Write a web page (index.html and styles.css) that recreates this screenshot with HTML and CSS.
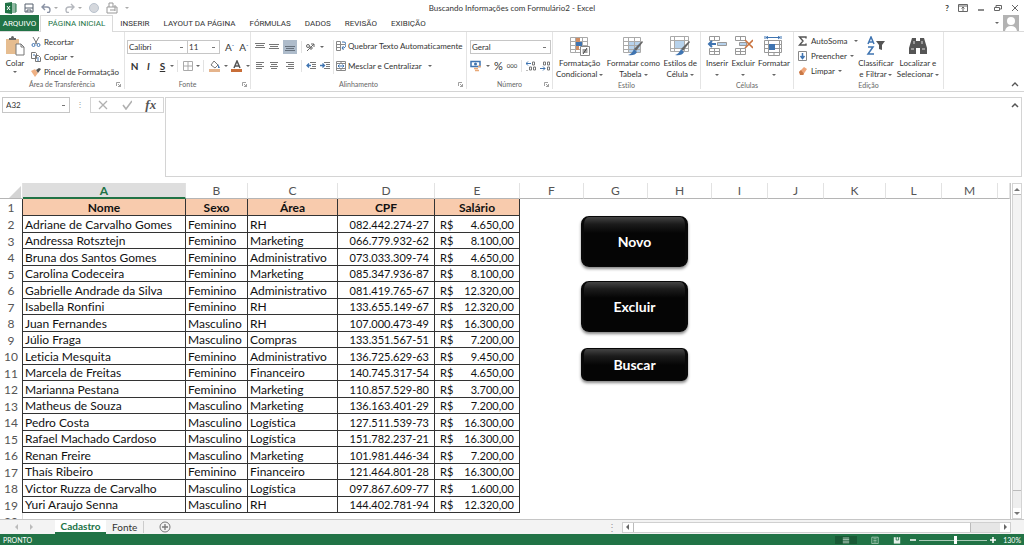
FILE: index.html
```html
<!DOCTYPE html>
<html lang="pt-BR">
<head>
<meta charset="utf-8">
<title>Buscando Informações com Formulário2 - Excel</title>
<link rel="stylesheet" href="styles.css">
</head>
<body>
<header class="titlebar">
  <div class="quick">
    <svg class="i12" viewBox="0 0 12 12"><path d="M6 2h5v8H6z" fill="#fff" stroke="#217346"/><path d="M7 4h4M7 6h4M7 8h4" stroke="#217346"/><path d="M0 1l7-1v12l-7-1z" fill="#217346"/><path d="M2 4l3 4M5 4L2 8" stroke="#fff"/></svg>
    <svg class="i10" viewBox="0 0 10 10" fill="none" stroke="#57606e"><path d="M1 1h8v8H1z"/><path d="M1 5h8M3 9V7h4v2" /></svg>
    <span class="pair"><svg class="i10" viewBox="0 0 10 10" fill="none" stroke="#8b93a5" stroke-width="1.4"><path d="M4 1L1 4l3 3M1 4h5q3 0 3 3t-3 2.500"/></svg><i class="caret dim"></i></span>
    <span class="pair"><svg class="i10" viewBox="0 0 10 10" fill="none" stroke="#b4b7bd" stroke-width="1.4"><path d="M6 1l3 3-3 3M9 4H4Q1 4 1 7t3 2.500"/></svg><i class="caret dim"></i></span>
    <svg class="i10" viewBox="0 0 10 10"><circle cx="5" cy="5" r="4.500" fill="#d5d8dd" stroke="#b9c2cd"/></svg>
    <svg class="i12" viewBox="0 0 12 12" fill="none" stroke="#999"><path d="M1 5h10v6H1zM3 5V1h4v4M4 8h5M9 3v6"/></svg>
    <i class="caret dim"></i>
  </div>
  <h1 class="title">Buscando Informações com Formulário2 - Excel</h1>
  <div class="window">
    <button aria-label="Ajuda">?</button>
    <button aria-label="Opções da faixa"><svg class="i10" viewBox="0 0 10 10" fill="none" stroke="#666"><path d="M.5 1.500h9v7h-9zM.5 3h9M5 8V4M3.500 5.500L5 4l1.500 1.500"/></svg></button>
    <button aria-label="Minimizar"><svg class="i8" viewBox="0 0 8 8"><path d="M1 6h6" stroke="#666" stroke-width="1.5"/></svg></button>
    <button aria-label="Restaurar"><svg class="i8" viewBox="0 0 8 8" fill="none" stroke="#666"><path d="M.5 3.500h5v3h-5zM2 3V1.500h5.500v3.500H6"/></svg></button>
    <button aria-label="Fechar"><svg class="i8" viewBox="0 0 8 8"><path d="M1 1l6 6M7 1L1 7" stroke="#666"/></svg></button>
  </div>
</header>
<nav class="tabs">
  <a href="#arquivo" class="file">ARQUIVO</a>
  <a href="#inicio" class="current">PÁGINA INICIAL</a>
  <a href="#inserir">INSERIR</a>
  <a href="#layout">LAYOUT DA PÁGINA</a>
  <a href="#formulas">FÓRMULAS</a>
  <a href="#dados">DADOS</a>
  <a href="#revisao">REVISÃO</a>
  <a href="#exibicao">EXIBIÇÃO</a>
  <button class="user" aria-label="Conta"><i class="caret"></i><svg class="avatar" viewBox="0 0 16 16"><path d="M0 0h16v16H0z" fill="#b3b3b3"/><circle cx="8" cy="6" r="4" fill="#fff"/><path d="M2 16q1-5 6-5t6 5z" fill="#fff"/></svg></button>
</nav>
<section class="ribbon">
  <div class="group clip">
    <div class="tools">
      <button class="big"><svg class="i20" viewBox="0 0 20 20"><path d="M1 3h13v15H1z" fill="#e6bd90"/><path d="M4 4V2h2q0-2 1.500-2T9 2h2v2z" fill="#666"/><path d="M11 8h5l3 3v8h-8z" fill="#fff" stroke="#777"/><path d="M16 8v3h3" fill="none" stroke="#777"/></svg>Colar<i class="caret"></i></button>
      <div class="stack">
        <button><svg class="i10" viewBox="0 0 10 10" fill="none"><path d="M2 0l4 7M8 0L4 7" stroke="#777"/><circle cx="2.500" cy="8" r="1.500" stroke="#3f74b1"/><circle cx="7.500" cy="8" r="1.500" stroke="#3f74b1"/></svg>Recortar</button>
        <button><svg class="i10" viewBox="0 0 10 10" fill="#fff" stroke="#777"><path d="M.5.5h4l1 1v5h-5zM4.500 3.500h3l2 2v4h-5z"/><path d="M6 6h2M6 8h2M2 3h2" stroke="#3f74b1"/></svg>Copiar <i class="caret"></i></button>
        <button><svg class="i10" viewBox="0 0 10 10"><path d="M0 4l4-2 3 4-3 4z" fill="#efb184"/><path d="M5 3l3-2 2 1-3 4z" fill="#555"/></svg>Pincel de Formatação</button>
      </div>
    </div>
    <div class="label">Área de Transferência<svg class="corner" viewBox="0 0 5 5"><path d="M.5 4V.5H4M2 2l2.500 2.500M4.500 2v2.500H2" fill="none" stroke="#888" stroke-width=".8"/></svg></div>
  </div>
  <div class="group font">
    <div class="tools lines">
      <div class="line tight"><select class="fontname" aria-label="Fonte"><option>Calibri</option></select><select class="fontsize" aria-label="Tamanho"><option>11</option></select>
        <button class="grow" aria-label="Aumentar fonte">A<sup>ˆ</sup></button><button class="grow" aria-label="Diminuir fonte">A<sup>ˇ</sup></button></div>
      <div class="line fmt"><button><b>N</b></button><button><b><em>I</em></b></button><button><b><u>S</u></b></button><i class="caret"></i><i class="sep"></i>
        <svg class="i10" viewBox="0 0 10 10" fill="none" stroke="#aaa"><path d="M.5.500h9v9h-9zM5 .5v9M.5 5h9"/></svg><i class="caret"></i><i class="sep"></i>
        <svg class="i12" viewBox="0 0 12 12"><path d="M2 5l3-4 4 4-3 3z" fill="#fff" stroke="#777"/><path d="M9 4l2 4H9z" fill="#3f74b1"/><path d="M0 9h11v3H0z" fill="#e5b48c"/></svg><i class="caret"></i>
        <svg class="i12" viewBox="0 0 12 12"><path d="M3 8l3-7 3 7M4 6h4" fill="none" stroke="#555" stroke-width="1.500"/><path d="M0 9h11v3H0z" fill="#c86e38"/></svg><i class="caret"></i></div>
    </div>
    <div class="label">Fonte<svg class="corner" viewBox="0 0 5 5"><path d="M.5 4V.5H4M2 2l2.500 2.500M4.500 2v2.500H2" fill="none" stroke="#888" stroke-width=".8"/></svg></div>
  </div>
  <div class="group align">
    <div class="tools">
      <div class="lines left">
        <div class="line al"><svg class="i10" viewBox="0 0 10 10" stroke="#777"><path d="M0 1.500h10M1 3.500h8M0 5.500h10"/></svg><svg class="i10" viewBox="0 0 10 10" stroke="#777"><path d="M0 2.500h10M1 4.500h8M0 6.500h10"/></svg><span class="on"><svg class="i10" viewBox="0 0 10 10" stroke="#66717d"><path d="M0 4.500h10M1 6.500h8M0 8.500h10"/></svg></span><i class="sep"></i><svg class="i10" viewBox="0 0 10 10" fill="none" stroke="#666"><path d="M1 9l7-7M5 2h3v3"/><circle cx="2" cy="4" r="1.500"/><circle cx="5" cy="6" r="1.200"/></svg><i class="caret"></i></div>
        <div class="line al"><svg class="i10" viewBox="0 0 10 10" stroke="#777"><path d="M1 1.500h8M1 3.500h6M1 5.500h8M1 7.500h6"/></svg><svg class="i10" viewBox="0 0 10 10" stroke="#777"><path d="M1 1.500h8M2 3.500h6M1 5.500h8M2 7.500h6"/></svg><svg class="i10 mid" viewBox="0 0 10 10" stroke="#777"><path d="M1 1.500h8M3 3.500h6M1 5.500h8M3 7.500h6"/></svg><i class="sep"></i><svg class="i10" viewBox="0 0 10 10" fill="none" stroke="#777"><path d="M4 1.500h6M6 3.500h4M6 5.500h4M4 7.500h6"/><path d="M5 4.500H1M3 2.500l-2 2 2 2" stroke="#3f74b1" stroke-width="1.300"/></svg><svg class="i10" viewBox="0 0 10 10" fill="none" stroke="#777"><path d="M4 1.500h6M6 3.500h4M6 5.500h4M4 7.500h6"/><path d="M0 4.500h4M2.500 2.500l2 2-2 2" stroke="#3f74b1" stroke-width="1.300"/></svg></div>
      </div>
      <div class="lines right">
        <button><svg class="i10" viewBox="0 0 10 10" fill="none" stroke="#888"><path d="M.5.500h4v9h-4zM.5 3.500h9M.5 6.500h4"/><path d="M6 1h2q2 0 2 2.500T8 7H6M7.500 5L6 7l1.500 2" stroke="#3f74b1"/></svg>Quebrar Texto Automaticamente</button>
        <button><svg class="i10" viewBox="0 0 10 10" fill="none" stroke="#888"><path d="M.5.500h9v9h-9zM.5 2.500h9M.5 7.500h9M5 .5v2M5 7.500v2"/><path d="M2 5h6M3.500 3.500L2 5l1.500 1.500M6.500 3.500L8 5 6.500 6.500" stroke="#3f74b1"/></svg>Mesclar e Centralizar<i class="caret"></i></button>
      </div>
    </div>
    <div class="label">Alinhamento<svg class="corner" viewBox="0 0 5 5"><path d="M.5 4V.5H4M2 2l2.500 2.500M4.500 2v2.500H2" fill="none" stroke="#888" stroke-width=".8"/></svg></div>
  </div>
  <div class="group number">
    <div class="tools lines">
      <div class="line"><select class="format" aria-label="Formato"><option>Geral</option></select></div>
      <div class="line num"><svg class="i12" viewBox="0 0 12 12"><path d="M1 1.500h9v5H1z" fill="#fff" stroke="#3f74b1" stroke-width="1.500"/><circle cx="5.500" cy="4" r="1.500" fill="#3f74b1"/><path d="M4 8.500h4M5 10.500h4M8 6.500h3" stroke="#e8a877" stroke-width="1.500"/></svg><i class="caret"></i><span class="pct">%</span><span class="zeros">000</span><i class="sep"></i>
        <svg class="i10" viewBox="0 0 10 10" fill="none" stroke="#777"><path d="M5 2.500H0M2 .5l-2 2 2 2" stroke="#3f74b1"/><path d="M6.500 1h2v3h-2zM3.500 6h2v3h-2zM7.500 6h2v3h-2zM1 9v1"/></svg>
        <svg class="i10" viewBox="0 0 10 10" fill="none" stroke="#777"><path d="M3.500 1h2v3h-2zM7.500 1h2v3h-2zM7.500 6h2v3h-2z"/><path d="M0 7.500h5M3 5.500l2 2-2 2" stroke="#3f74b1"/></svg></div>
    </div>
    <div class="label">Número<svg class="corner" viewBox="0 0 5 5"><path d="M.5 4V.5H4M2 2l2.500 2.500M4.500 2v2.500H2" fill="none" stroke="#888" stroke-width=".8"/></svg></div>
  </div>
  <div class="group style">
    <div class="tools">
      <button class="big"><svg class="i20" viewBox="0 0 20 20" fill="none" stroke="#aaa"><path d="M.5 1.500h17v15H.5zM.5 5.500h17M.5 9.500h17M.5 13.500h17M5.500 1.500v15M12.500 1.500v15"/><path d="M6 2h4v4H6z" fill="#cf8d63" stroke="none"/><path d="M6 6h6v4H6z" fill="#3f74b1" stroke="none"/><path d="M6 10h3v4H6z" fill="#cf8d63" stroke="none"/><path d="M10.500 10.500h9v9h-9z" fill="#fff" stroke="#888"/><path d="M12.500 14h5M12.500 16h5M17 12l-4 6" stroke="#444"/></svg><span>Formatação<br>Condicional <i class="caret"></i></span></button>
      <button class="big"><svg class="i20" viewBox="0 0 20 20" fill="none" stroke="#aaa"><path d="M5 5h12v11H5z" fill="#b7d2ec" stroke="none"/><path d="M.5 1.500h17v15H.5zM.5 5.500h17M.5 9.500h17M.5 13.500h17M5.500 1.500v15M11.500 1.500v15"/><path d="M19 5l1 1-7 9-2-2z" fill="#666" stroke="none"/><path d="M11 13l3 3q-2 4-9 3 4-1 6-6z" fill="#3f74b1" stroke="none"/></svg><span>Formatar como<br>Tabela <i class="caret"></i></span></button>
      <button class="big"><svg class="i20" viewBox="0 0 20 20" fill="none" stroke="#aaa"><path d="M4 5h10v7H4z" fill="#b7d2ec" stroke="none"/><path d="M.5.500h18v15H.5zM.5 4.500h18M.5 12.500h18M4.500.500v15M14.500.500v15"/><path d="M19 5l1 1-7 9-2-2z" fill="#666" stroke="none"/><path d="M11 13l3 3q-2 4-9 3 4-1 6-6z" fill="#3f74b1" stroke="none"/></svg><span>Estilos de<br>Célula <i class="caret"></i></span></button>
    </div>
    <div class="label">Estilo</div>
  </div>
  <div class="group cells">
    <div class="tools">
      <button class="big"><svg class="i20" viewBox="0 0 20 20" fill="#fff" stroke="#999"><path d="M2.500.500h10v4h-10zM7.500.500v4M2.500 12.500h10v6h-10zM7.500 12.500v6M2.500 15.500h10"/><path d="M10.500 6.500h9v3h-9z" fill="#b7d2ec"/><path d="M9 8H2M5 5L2 8l3 3" fill="none" stroke="#3f74b1" stroke-width="2"/></svg><span>Inserir<br><i class="caret"></i></span></button>
      <button class="big"><svg class="i20" viewBox="0 0 20 20" fill="#fff" stroke="#999"><path d="M2.500.500h10v4h-10zM7.500.500v4M2.500 12.500h10v6h-10zM7.500 12.500v6M2.500 15.500h10"/><path d="M6.500 6.500h7v3h-7z" fill="#b7d2ec"/><path d="M12 4l8 8M20 4l-8 8" stroke="#c9733f" stroke-width="1.600"/></svg><span>Excluir<br><i class="caret"></i></span></button>
      <button class="big"><svg class="i20" viewBox="0 0 20 20" fill="#fff" stroke="#999"><path d="M.5 4.500h17v12H.5zM.5 8.500h17M.5 12.500h17M4.500 4.500v15h11v-15M10 16v4"/><path d="M5 8h6v6H5z" fill="#3f74b1" stroke="none"/><path d="M2 1.500h14M4 0L2 1.500 4 3M14 0l2 1.500L14 3M1 0v3M17 0v3" fill="none" stroke="#3f74b1"/></svg><span>Formatar<br><i class="caret"></i></span></button>
    </div>
    <div class="label">Células</div>
  </div>
  <div class="group edit">
    <div class="tools">
      <div class="stack">
        <button><svg class="i10" viewBox="0 0 10 10" fill="none" stroke="#555" stroke-width="1.400"><path d="M8 2.500V1H1.500L5 5 1.500 9H8V7.500"/></svg>AutoSoma <i class="caret far"></i></button>
        <button><svg class="i10" viewBox="0 0 10 10" fill="none" stroke="#888"><path d="M.5.500h8v9h-8z"/><path d="M4.500 2v5M2.500 5l2 2.500 2-2.500" stroke="#3f74b1" stroke-width="1.500"/></svg>Preencher <i class="caret"></i></button>
        <button><svg class="i10" viewBox="0 0 10 10"><path d="M1 6l5-5 3 2-4 6H3z" fill="#efa67a"/><path d="M1 6l2-2 3 4-1 1H2z" fill="#c97845"/></svg>Limpar <i class="caret"></i></button>
      </div>
      <button class="big"><svg class="i20" viewBox="0 0 20 20" fill="none"><path d="M2 8l3-7 3 7M3 6h4M2 11h5l-5 7h6" stroke="#3f74b1" stroke-width="1.500"/><path d="M10 5h9l-3 4v5l-3-1V9z" fill="#555"/></svg><span>Classificar<br>e Filtrar <i class="caret"></i></span></button>
      <button class="big"><svg class="i20" viewBox="0 0 20 20" fill="#555"><path d="M4 2h4v3h4V2h4l3 10v6h-7v-6H8v6H1v-6z"/><path d="M3 13h3M14 13h3M6 5v3M14 5v3" stroke="#ddd"/></svg><span>Localizar e<br>Selecionar <i class="caret"></i></span></button>
    </div>
    <div class="label">Edição</div>
  </div>
  <button class="collapse" aria-label="Recolher"><svg class="i8" viewBox="0 0 8 8" fill="none" stroke="#555" stroke-width="1.300"><path d="M1 5l3-3 3 3"/></svg></button>
</section>
<section class="formula">
  <select class="name" aria-label="Caixa de nome"><option>A32</option></select>
  <span class="dots">⋮</span>
  <div class="fx"><button aria-label="Cancelar"><svg class="i10" viewBox="0 0 10 10"><path d="M1 1l8 8M9 1L1 9" stroke="#b0b0b0" stroke-width="1.300"/></svg></button><button aria-label="Inserir"><svg class="i10" viewBox="0 0 10 10"><path d="M1 5l3 4 6-8" fill="none" stroke="#b0b0b0" stroke-width="1.600"/></svg></button><button class="fn"><em>fx</em></button></div>
  <div class="entry"><textarea aria-label="Barra de fórmulas"></textarea><svg class="i8" viewBox="0 0 8 8" fill="none" stroke="#555" stroke-width="1.500"><path d="M1 5l3-3 3 3"/></svg></div>
</section>
<main class="sheet">
  <div class="grid">
    <table>
      <colgroup><col class="w-n"><col class="w-a"><col class="w-b"><col class="w-c"><col class="w-d"><col class="w-e"><col class="w-g"><col class="w-g"><col class="w-g"><col class="w-i"><col class="w-i"><col class="w-f"><col class="w-i"><col class="w-i"><col></colgroup>
      <thead><tr><th><svg class="all" viewBox="0 0 12 12"><path d="M12 0v12H0z" fill="#d4d4d4"/></svg></th><th class="sel">A</th><th>B</th><th>C</th><th>D</th><th>E</th><th>F</th><th>G</th><th>H</th><th>I</th><th>J</th><th>K</th><th>L</th><th>M</th><th></th></tr></thead>
      <tbody>
        <tr class="head"><th>1</th><td>Nome</td><td>Sexo</td><td>Área</td><td>CPF</td><td>Salário</td></tr>
        <tr><th>2</th><td>Adriane de Carvalho Gomes</td><td>Feminino</td><td>RH</td><td>082.442.274-27</td><td><span>R$</span>4.650,00</td></tr>
        <tr><th>3</th><td>Andressa Rotsztejn</td><td>Feminino</td><td>Marketing</td><td>066.779.932-62</td><td><span>R$</span>8.100,00</td></tr>
        <tr><th>4</th><td>Bruna dos Santos Gomes</td><td>Feminino</td><td>Administrativo</td><td>073.033.309-74</td><td><span>R$</span>4.650,00</td></tr>
        <tr><th>5</th><td>Carolina Codeceira</td><td>Feminino</td><td>Marketing</td><td>085.347.936-87</td><td><span>R$</span>8.100,00</td></tr>
        <tr><th>6</th><td>Gabrielle Andrade da Silva</td><td>Feminino</td><td>Administrativo</td><td>081.419.765-67</td><td><span>R$</span>12.320,00</td></tr>
        <tr><th>7</th><td>Isabella Ronfini</td><td>Feminino</td><td>RH</td><td>133.655.149-67</td><td><span>R$</span>12.320,00</td></tr>
        <tr><th>8</th><td>Juan Fernandes</td><td>Masculino</td><td>RH</td><td>107.000.473-49</td><td><span>R$</span>16.300,00</td></tr>
        <tr><th>9</th><td>Júlio Fraga</td><td>Masculino</td><td>Compras</td><td>133.351.567-51</td><td><span>R$</span>7.200,00</td></tr>
        <tr><th>10</th><td>Leticia Mesquita</td><td>Feminino</td><td>Administrativo</td><td>136.725.629-63</td><td><span>R$</span>9.450,00</td></tr>
        <tr><th>11</th><td>Marcela de Freitas</td><td>Feminino</td><td>Financeiro</td><td>140.745.317-54</td><td><span>R$</span>4.650,00</td></tr>
        <tr><th>12</th><td>Marianna Pestana</td><td>Feminino</td><td>Marketing</td><td>110.857.529-80</td><td><span>R$</span>3.700,00</td></tr>
        <tr><th>13</th><td>Matheus de Souza</td><td>Masculino</td><td>Marketing</td><td>136.163.401-29</td><td><span>R$</span>7.200,00</td></tr>
        <tr><th>14</th><td>Pedro Costa</td><td>Masculino</td><td>Logística</td><td>127.511.539-73</td><td><span>R$</span>16.300,00</td></tr>
        <tr><th>15</th><td>Rafael Machado Cardoso</td><td>Masculino</td><td>Logística</td><td>151.782.237-21</td><td><span>R$</span>16.300,00</td></tr>
        <tr><th>16</th><td>Renan Freire</td><td>Masculino</td><td>Marketing</td><td>101.981.446-34</td><td><span>R$</span>7.200,00</td></tr>
        <tr><th>17</th><td>Thaís Ribeiro</td><td>Feminino</td><td>Financeiro</td><td>121.464.801-28</td><td><span>R$</span>16.300,00</td></tr>
        <tr><th>18</th><td>Victor Ruzza de Carvalho</td><td>Masculino</td><td>Logística</td><td>097.867.609-77</td><td><span>R$</span>1.600,00</td></tr>
        <tr><th>19</th><td>Yuri Araujo Senna</td><td>Masculino</td><td>RH</td><td>144.402.781-94</td><td><span>R$</span>12.320,00</td></tr>
        <tr><th>20</th></tr>
      </tbody>
    </table>
    <div class="macros"><button>Novo</button><button>Excluir</button><button class="short">Buscar</button></div>
  </div>
  <div class="vscroll"><button aria-label="Acima"><i class="tri up"></i></button><span class="vthumb"></span><button aria-label="Abaixo"><i class="tri down"></i></button></div>
</main>
<footer class="sheets">
  <div class="arrows"><i class="tri left"></i><i class="tri rightw"></i></div>
  <a href="#cadastro" class="active">Cadastro</a><a href="#fonte" class="other">Fonte</a>
  <button class="add" aria-label="Nova planilha"><svg viewBox="0 0 12 12" fill="none" stroke="#777"><circle cx="6" cy="6" r="5"/><path d="M6 3v6M3 6h6" stroke-width="1.300"/></svg></button>
  <span class="dots">⋮</span>
  <div class="hscroll"><button aria-label="Esquerda"><i class="tri left dark"></i></button><span class="hthumb"></span><button aria-label="Direita"><i class="tri rightw dark"></i></button></div>
</footer>
<div class="status">
  <span>PRONTO</span>
  <div class="views">
    <span class="view"><svg class="i8" viewBox="0 0 10 10" stroke="#c8ddd0"><path d="M1 2.500h8M1 4.500h8M1 6.500h8M1 8.500h8"/></svg></span>
    <svg class="i8" viewBox="0 0 10 10" fill="none" stroke="#b3d0bf"><path d="M1 1.500h8v8H1zM3 3.500h4M3 5.500h4M3 7.500h4"/></svg>
    <svg class="i8" viewBox="0 0 10 10"><path d="M1 1.500h8v8H1z" fill="#e4efe8"/><path d="M4 1v4h3V1" fill="none" stroke="#217346"/></svg>
  </div>
  <div class="zoom"><button aria-label="Reduzir"><svg class="i8" viewBox="0 0 8 8"><path d="M1 4h6" stroke="#fff" stroke-width="1.500"/></svg></button><input type="range" min="0" max="100" value="54" aria-label="Zoom"><button aria-label="Ampliar"><svg class="i8" viewBox="0 0 8 8"><path d="M1 4h6M4 1v6" stroke="#fff" stroke-width="1.500"/></svg></button></div>
  <span class="pctz">130%</span>
</div>
</body>
</html>
```
FILE: styles.css
```css
* { box-sizing: border-box; }
body {
  margin: 0;
  height: 100vh;
  display: flex;
  flex-direction: column;
  overflow: hidden;
  background: #fff;
  color: #333;
  font: 8px/10px Lato, "Open Sans", sans-serif;
  font-variant-ligatures: none;
}
button, select, input, textarea { font: inherit; color: inherit; }
button { display: flex; align-items: center; border: 0; padding: 0; background: none; white-space: nowrap; }
a { color: inherit; text-decoration: none; }
svg { flex: none; display: block; }
.i8 { width: 8px; height: 8px; }
.i10 { width: 10px; height: 10px; }
.i12 { width: 12px; height: 12px; }
.i20 { width: 20px; height: 20px; }
.caret {
  display: inline-block;
  flex: none;
  border: 2px solid transparent;
  border-top-color: #666;
  border-bottom: 0;
  vertical-align: middle;
}
.caret.dim { border-top-color: #aaa; }
.sep { width: 1px; height: 12px; background: #e2e2e2; }

.titlebar { display: grid; grid-template-columns: 1fr auto 1fr; height: 15px; align-items: center; }
.quick { display: flex; align-items: center; gap: 7px; padding-left: 5px; }
.pair { display: flex; align-items: center; gap: 3px; }
.title { margin: 0; font-size: 8px; font-weight: 400; line-height: 14px; }
.window { display: flex; justify-content: flex-end; align-items: center; gap: 9px; padding-right: 5px; font-weight: 700; }

.tabs { display: flex; height: 17px; flex: none; border-bottom: 1px solid #dadada; font-family: Roboto, sans-serif; line-height: 17px; }
.tabs a { padding: 0 7px; }
.tabs .file { background: #217346; color: #fff; width: 39px; padding: 0; text-align: center; }
.tabs .current { color: #217346; background: #fff; border: solid #dadada; border-width: 1px 1px 0; height: 17px; line-height: 15px; margin-left: 1px; }
.user { gap: 4px; margin-left: auto; padding-right: 5px; }
.avatar { width: 16px; height: 16px; }

.ribbon { display: flex; height: 60px; flex: none; border-bottom: 1px solid #d4d4d4; }
.group { display: flex; flex-direction: column; border-right: 1px solid #e4e4e4; margin-bottom: 2px; flex: none; }
.tools { display: flex; flex: 1; padding-top: 4px; }
.label { position: relative; text-align: center; font-size: 7px; line-height: 10px; color: #666; }
.corner { position: absolute; right: 3px; top: 3px; width: 5px; height: 5px; }
.big { flex-direction: column; justify-content: flex-start; text-align: center; line-height: 11px; gap: 2px; }
.stack { display: flex; flex-direction: column; gap: 5px; }
.stack button { gap: 3px; height: 10px; }
.stack .far { margin-left: 4px; }
.lines { display: flex; flex-direction: column; gap: 7px; }
.line { display: flex; align-items: center; height: 14px; }
select {
  appearance: none;
  height: 14px;
  margin: 0;
  padding: 0 1px;
  border: 1px solid #c6c6c6;
  border-radius: 0;
  background: linear-gradient(#777, #777) right 4px center / 3px 1px no-repeat #fff;
}
.clip { width: 125px; }
.clip .tools { gap: 6px; padding-left: 5px; }
.clip .stack { padding-top: 1px; }
.font { width: 126px; }
.font .lines { padding: 8px 0 0 2px; gap: 5px; }
.fontname { width: 61px; }
.fontsize { width: 33px; margin-left: -1px; }
.grow { font-size: 10px; margin-left: 5px; }
.grow sup { font-size: 6px; color: #3f74b1; }
.fmt { gap: 5px; padding-left: 3px; }
.fmt button { width: 9px; font-size: 10px; justify-content: center; }
.fmt .caret { margin: 0 -2px; }
.align { width: 216px; }
.align .tools { padding: 8px 0 0 4px; }
.left { width: 78px; gap: 5px; }
.al { gap: 4px; }
.on { display: flex; background: #aebccb; padding: 2px; }
.mid { margin: 0 2px; }
.right { border-left: 1px solid #e4e4e4; gap: 8px; padding-left: 2px; height: 34px; }
.right button { gap: 2px; height: 12px; }
.right .caret { margin-left: 4px; }
.number { width: 86px; }
.number .lines { padding: 8px 0 0 3px; gap: 5px; }
.format { width: 81px; }
.num { gap: 4px; }
.pct { font-size: 11px; }
.zeros { font-size: 6px; }
.style { width: 148px; }
.style .tools { padding: 4px 3px 0; justify-content: space-between; }
.cells { width: 93px; }
.cells .tools { padding: 4px 3px 0 5px; justify-content: space-between; }
.edit { width: 150px; }
.edit .tools { padding: 4px 4px 0; justify-content: space-between; }
.edit .stack { width: 57px; }
.collapse { margin-left: auto; align-self: flex-end; padding: 0 5px 2px 0; }

.formula { display: flex; align-items: flex-start; height: 80px; flex: none; margin: 5px 2px 0 2px; }
.name { width: 68px; height: 16px; padding: 0 3px; }
.dots { width: 20px; text-align: center; color: #999; line-height: 15px; }
.fx { display: flex; justify-content: space-around; width: 74px; height: 16px; border: 1px solid #d4d4d4; }
.fn { font: 700 13px/12px "Liberation Serif", serif; color: #555; }
.entry { flex: 1; align-self: stretch; display: flex; margin-left: 1px; border: 1px solid #d4d4d4; padding: 4px 2px; }
.entry textarea { flex: 1; border: 0; padding: 0; resize: none; background: none; }

.sheet { display: flex; flex: 1; min-height: 0; padding-top: 6px; }
.grid { position: relative; flex: 1; overflow: hidden; border-right: 1px solid #c6c6c6; }
table { width: 100%; table-layout: fixed; border-collapse: separate; border-spacing: 0; font-size: 12px; line-height: 15px; color: #111; }
.w-n { width: 23px; }
.w-a { width: 163px; }
.w-b { width: 62px; }
.w-c { width: 90px; }
.w-d { width: 97px; }
.w-e { width: 85px; }
.w-f { width: 62px; }
.w-g { width: 64px; }
.w-i { width: 56px; }
th, td { padding: 0 2px; overflow: hidden; white-space: nowrap; }
th { font-weight: 400; color: #555; padding: 0; }
thead th { height: 16px; line-height: 14px; border-right: 1px solid #e2e2e2; border-bottom: 1px solid #b5b5b5; }
thead .sel { background: #dedede; color: #217346; font-weight: 700; border-bottom: 2px solid #217346; line-height: 13px; }
.all { width: 12px; height: 12px; margin: 2px 0 0 9px; }
tbody tr { height: 17px; }
tbody tr:nth-child(odd) { height: 16px; }
tbody tr:first-child { height: 17px; }
tbody th { border-right: 1px solid #333; }
tbody tr:last-child th { border-color: #ddd; }
td { border-right: 1px solid #333; border-bottom: 1px solid #333; }
td:nth-child(5), td:nth-child(6) { text-align: right; padding-right: 5px; font-size: 11px; }
td span { float: left; padding-left: 3px; }
.head td, .head td:nth-child(n) { text-align: center; font-weight: 700; font-size: 12px; background: #f8cbad; padding: 0; }
.macros { position: absolute; left: 581px; top: 33px; width: 107px; display: flex; flex-direction: column; gap: 14px; }
.macros button {
  height: 51px;
  justify-content: center;
  border-radius: 8px;
  color: #fff;
  font: 700 14px/18px Lato, sans-serif;
  background: linear-gradient(#444, #1c1c1c 7px, #050505 16px);
  border: solid #080808;
  border-width: 1px 3px;
  box-shadow: 0 2px 3px #888;
}
.macros .short { height: 33px; margin-top: 2px; border-radius: 6px; }
.vscroll { display: flex; flex-direction: column; width: 10px; margin: 0 2px 0 1px; background: #eee; border: 1px solid #d4d4d4; }
.vscroll button { height: 10px; justify-content: center; background: #fff; }
.vthumb { flex: 1; border: solid #bbb; border-width: 1px 0; margin-bottom: 17px; background: #f3f3f3; }
.tri { border: 3px solid transparent; width: 0; height: 0; }
.up { border-bottom-color: #777; border-top: 0; }
.down { border-top-color: #777; border-bottom: 0; }
.left.tri { border-right-color: #bbb; border-left: 0; }
.rightw { border-left-color: #bbb; border-right: 0; }
.tri.left.dark { border-right-color: #666; }
.rightw.dark { border-left-color: #666; }

.sheets { display: flex; flex: none; height: 15px; background: #f3f3f3; border-top: 1px solid #c6c6c6; font-size: 10px; line-height: 13px; align-items: center; }
.arrows { display: flex; gap: 12px; width: 55px; padding-left: 15px; }
.active { width: 51px; text-align: center; align-self: stretch; background: #fff; color: #217346; font-weight: 700; border-bottom: 2px solid #217346; line-height: 12px; }
.other { padding: 0 6px; border-right: 1px solid #ccc; line-height: 12px; }
.add { margin: 0 auto 0 15px; }
.add svg { width: 12px; height: 12px; }
.hscroll { display: flex; width: 38%; height: 11px; margin-right: 13px; background: #e6e6e6; border: 1px solid #d0d0d0; }
.hscroll button { width: 10px; justify-content: center; background: #fff; }
.hthumb { flex: 1; margin-right: 29px; background: #fff; border: solid #bbb; border-width: 0 1px; }

.status { display: flex; flex: none; align-items: center; height: 11px; background: #217346; color: #fff; font-size: 7px; padding: 1px 3px 0; }
.views { display: flex; gap: 14px; margin-left: auto; align-items: center; }
.view { background: #195a36; padding: 0 7px; }
.zoom { display: flex; align-items: center; gap: 2px; margin: 0 6px 0 8px; }
.zoom input { appearance: none; width: 68px; height: 8px; margin: 0; background: linear-gradient(#a9c9b6, #a9c9b6) center / 100% 1px no-repeat; }
.zoom input::-webkit-slider-thumb { appearance: none; width: 3px; height: 8px; background: #fff; }
```
